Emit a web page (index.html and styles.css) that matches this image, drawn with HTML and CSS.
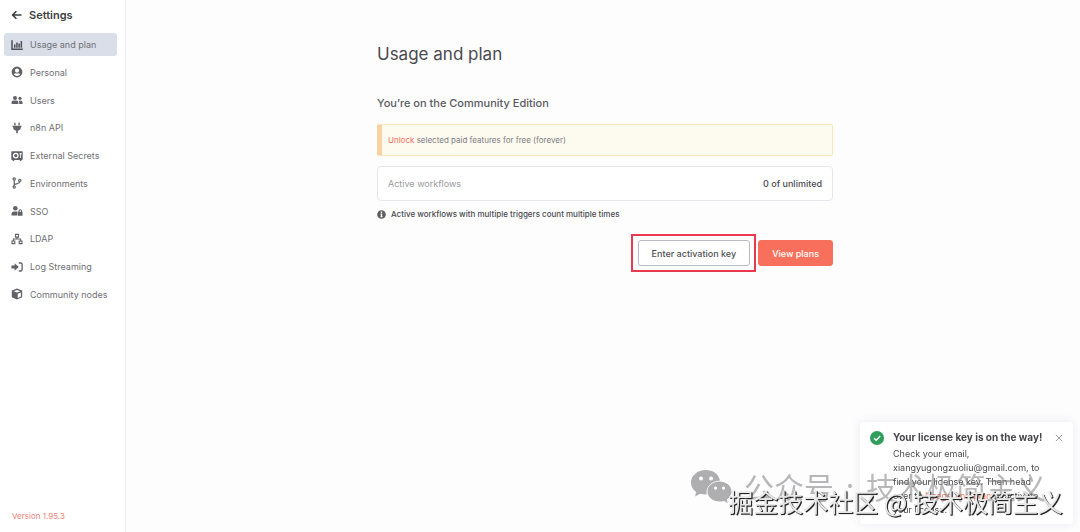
FILE: index.html
```html
<!DOCTYPE html>
<html lang="en">
<head>
<meta charset="utf-8">
<meta name="viewport" content="width=device-width, initial-scale=1.0">
<title>Settings - Usage and plan</title>
<link rel="stylesheet" href="styles.css">
</head>
<body>
<div class="app">
	<aside class="sidebar">
		<a href="#" class="back">
			<svg class="icon" viewBox="0 0 12 12"><path d="M10.500 6H1.800M5.400 2.200 1.600 6l3.800 3.800" fill="none" stroke="currentColor" stroke-width="1.600"/></svg>
			<span>Settings</span>
		</a>
		<nav class="menu">
			<a href="#" class="item active">
				<svg class="icon" viewBox="0 0 12 12"><path d="M1 1.200v9h10.800" fill="none" stroke="currentColor" stroke-width="1.500"/><path d="M3 5.500h1.500v3.200H3zM5.200 3.500h1.500v5.200H5.200zM7.400 4.600h1.500v4.100H7.400zM9.600 2h1.500v6.700H9.600z"/></svg>
				<span>Usage and plan</span>
			</a>
			<a href="#" class="item">
				<svg class="icon" viewBox="0 0 12 12"><path fill-rule="evenodd" d="M6 .6a5.400 5.400 0 1 0 0 10.800A5.400 5.400 0 0 0 6 .6zM6 2.500a2.100 2.100 0 1 1 0 4.200 2.100 2.100 0 0 1 0-4.200zM2.900 8.600c.5-.9 1.200-1.300 2-1.300.7.3 1.500.3 2.200 0 .8 0 1.500.4 2 1.300A4 4 0 0 1 6 10a4 4 0 0 1-3.100-1.400z"/></svg>
				<span>Personal</span>
			</a>
			<a href="#" class="item">
				<svg class="icon" viewBox="0 0 12 12"><circle cx="4" cy="4" r="2"/><circle cx="9" cy="4.300" r="1.600"/><path d="M.6 10V8.600c0-1.200.8-2 2-2h2.800c1.200 0 2 .8 2 2V10zM8.200 10V8.400c0-.7-.2-1.200-.6-1.700h2.200c1 0 1.700.7 1.700 1.700V10z"/></svg>
				<span>Users</span>
			</a>
			<a href="#" class="item">
				<svg class="icon" viewBox="0 0 12 12"><path d="M3.200.7h1.400v2.600H3.200zM7.400.7h1.400v2.600H7.400zM1.500 3.800h9V5h-.6c0 2-1.200 3.400-3.100 3.800v2.400H5.200V8.800C3.300 8.400 2.100 7 2.100 5h-.6z"/></svg>
				<span>n8n API</span>
			</a>
			<a href="#" class="item">
				<svg class="icon" viewBox="0 0 12 12"><path fill-rule="evenodd" d="M1 1.200h10c.4 0 .7.3.7.7v7.400c0 .4-.3.7-.7.7h-.6v.9H8.800V10H3.200v.9H1.600V10H1c-.4 0-.7-.3-.7-.7V1.900c0-.4.3-.7.7-.7zM4.800 2.700a2.900 2.900 0 1 0 0 5.800 2.900 2.900 0 0 0 0-5.800zM8.600 3v1.500h.6V8h.8V4.500h.6V3z"/><circle cx="4.800" cy="5.600" r="1.600"/></svg>
				<span>External Secrets</span>
			</a>
			<a href="#" class="item">
				<svg class="icon" viewBox="0 0 12 12"><g fill="none" stroke="currentColor" stroke-width="1.200"><circle cx="3.200" cy="2" r="1.100"/><circle cx="3.200" cy="10" r="1.100"/><circle cx="8.800" cy="3.400" r="1.100"/><path d="M3.200 3.200v5.600M8.800 4.600c0 2-2.200 1.900-5.200 2.900"/></g></svg>
				<span>Environments</span>
			</a>
			<a href="#" class="item">
				<svg class="icon" viewBox="0 0 12 12"><circle cx="4.300" cy="3.300" r="2.300"/><path d="M.5 10.500V9c0-1.600 1-2.600 2.600-2.600h2.300c.4 0 .8.1 1.100.2v3.900z"/><path fill-rule="evenodd" d="M7 6.800h.5v-.9a1.700 1.700 0 0 1 3.500 0v.9h.5v3.900H7zM8.500 6.800H10v-.9a.75.75 0 0 0-1.500 0z"/></svg>
				<span>SSO</span>
			</a>
			<a href="#" class="item">
				<svg class="icon" viewBox="0 0 12 12"><g fill="none" stroke="currentColor" stroke-width="1.100"><path d="M4.500 1.400h3v2.700h-3zM1 8h2.800v2.600H1zM8.200 8H11v2.600H8.200zM6 4.200V6M2.400 8V6h7.200v2"/></g></svg>
				<span>LDAP</span>
			</a>
			<a href="#" class="item">
				<svg class="icon" viewBox="0 0 12 12"><path d="M.4 4.600h3.200V2.300L7.800 6 3.600 9.700V7.400H.4z"/><path d="M7.800 2h2c.8 0 1.300.5 1.300 1.300v5.400c0 .8-.5 1.300-1.300 1.300h-2" fill="none" stroke="currentColor" stroke-width="1.300"/></svg>
				<span>Log Streaming</span>
			</a>
			<a href="#" class="item">
				<svg class="icon" viewBox="0 0 12 12"><path fill-rule="evenodd" d="M6 .6l5.200 2v6.600L6 11.500.8 9.200V2.600zM6 1.900 2.600 3.200 6 4.600l3.400-1.400zM6.700 5.800v4.100L9.900 8.500V4.500z"/></svg>
				<span>Community nodes</span>
			</a>
		</nav>
		<a href="#" class="version">Version 1.95.3</a>
	</aside>
	<main class="main">
		<div class="content">
			<h1>Usage and plan</h1>
			<h2>You’re on the Community Edition</h2>
			<div class="notice"><p><a href="#">Unlock</a> selected paid features for free (forever)</p></div>
			<div class="quota">
				<span class="quota_name">Active workflows</span>
				<span class="quota_value">0 of unlimited</span>
			</div>
			<p class="info">
				<svg viewBox="0 0 10 10"><circle cx="5" cy="5" r="4.800" fill="#5f5f63"/><path d="M4.300 1.800h1.400v1.400H4.300zM3.900 4h1.800v3h.5v1H3.800V7h.5V5h-.4z" fill="#fff"/></svg>
				<span>Active workflows with multiple triggers count multiple times</span>
			</p>
			<div class="buttons">
				<div class="highlight"><button type="button" class="btn">Enter activation key</button></div>
				<button type="button" class="btn primary">View plans</button>
			</div>
		</div>
	</main>
</div>
<div class="toast" role="alert">
	<svg class="toast_icon" viewBox="0 0 14 14"><circle cx="7" cy="7" r="7" fill="#2f9e5b"/><path d="M4 7.200l2.200 2.100L10.200 5" fill="none" stroke="#fff" stroke-width="1.400"/></svg>
	<div class="toast_body">
		<h3>Your license key is on the way!</h3>
		<p>Check your email, xiangyugongzuoliu@gmail.com, to find your license key. Then head over to <a href="#">Usage and plan</a> to activate your license.</p>
	</div>
	<button type="button" class="close" aria-label="Close"><svg viewBox="0 0 8 8"><path d="M.8.8l6.400 6.400M7.200.8.8 7.200" fill="none" stroke="#909298" stroke-width=".9"/></svg></button>
</div>
<div class="mark mark_grey">
	<svg viewBox="0 0 42 34"><path fill-rule="evenodd" d="M16 1C7.500 1 1 6.500 1 13.500c0 4 2 7.300 5.200 9.500L5 27.500l5.200-2.700c2 .6 4 .8 6.500.7C15.500 18 21 12 30 11.500 28.500 5 23 1 16 1zM11 7.500a2 2 0 1 1 0 4 2 2 0 0 1 0-4zM21 7.500a2 2 0 1 1 0 4 2 2 0 0 1 0-4z"/><path fill-rule="evenodd" d="M29.500 12.500c-6.600 0-12 4.400-12 10s5.400 10 12 10c1.500 0 3-.2 4.300-.6l4 2-1-3.400c2.800-1.900 4.700-4.700 4.700-8 0-5.600-5.400-10-12-10zM25.500 17.500a1.600 1.600 0 1 1 0 3.200 1.600 1.600 0 0 1 0-3.200zM33.500 17.500a1.600 1.600 0 1 1 0 3.200 1.600 1.600 0 0 1 0-3.200z"/></svg>
	<span>公众号</span>
	<span class="dot">·</span>
	<span>技术极简主义</span>
</div>
<div class="mark mark_site">掘金技术社区 @ 技术极简主义</div>
</body>
</html>
```
FILE: styles.css
```css
*{box-sizing:border-box;}
body{margin:0;background:#fdfdfe;color:#4a4a4e;font-family:Inter,"Noto Sans CJK SC",sans-serif;font-size:9px;}
h1,h2,h3,p{margin:0;font-weight:400;}
a{color:inherit;text-decoration:none;}
button{font-family:inherit;}
svg{display:block;flex:none;}
.app{display:flex;min-height:100vh;}
.sidebar{width:126px;flex:none;display:flex;flex-direction:column;background:#fff;border-right:1px solid #ececf0;}
.back{display:flex;align-items:center;gap:6px;height:29px;padding:0 11px;font-size:11px;font-weight:600;color:#3f3f43;}
.icon{width:12px;height:12px;fill:currentColor;}
.menu{display:flex;flex-direction:column;justify-content:space-between;height:277px;padding:4px 8px 0 4px;}
.item{display:flex;align-items:center;gap:7px;height:23px;padding:0 7px;border-radius:3px;color:#707075;}
.item .icon{color:#626266;}
.active{background:#d9dee8;}
.active .icon{color:#4f4f55;}
.version{margin-top:auto;padding:0 12px 10px;font-size:8px;line-height:12px;color:#f0837a;}
.main{flex:1;display:flex;justify-content:center;padding:40px 24px 40px 28px;}
.content{width:100%;max-width:456px;}
h1{font-size:17px;line-height:28px;}
h2{margin-top:25px;font-size:11px;line-height:20px;font-weight:500;color:#5a5a5e;}
.notice{margin-top:11px;padding:9px 6px;border:1px solid #f8e5c0;border-left:5px solid #f8d3a0;border-radius:2px;background:#fdfaf0;font-size:8px;line-height:12px;color:#7d7d80;}
.notice a{color:#f4705c;}
.quota{display:flex;justify-content:space-between;align-items:center;height:35px;margin-top:10px;padding:0 10px;border:1px solid #e6e7ec;border-radius:4px;background:#fff;}
.quota_name{color:#9a9a9e;}
.quota_value{font-weight:500;}
.info{display:flex;align-items:center;gap:5px;margin-top:7px;font-size:8px;line-height:12px;font-weight:500;}
.info svg{width:9px;height:9px;}
.buttons{display:flex;justify-content:flex-end;align-items:center;gap:2px;margin-top:14px;}
.highlight{padding:4px 4px 4px 5px;border:2px solid #e8394f;}
.btn{height:26px;padding:0 13px;border:1px solid #b9bac6;border-radius:3px;background:#fff;font-size:9px;font-weight:500;color:#4f4f54;}
.primary{border-color:#f8705c;background:#f8705c;color:#fff;}
.toast{position:fixed;right:7px;bottom:8px;display:flex;align-items:flex-start;width:213px;padding:8px 10px 7px;border-radius:3px;background:#fff;box-shadow:0 0 10px rgba(60,60,90,.1);}
.toast_icon{width:14px;height:14px;margin-top:1px;}
.toast_body{flex:1;padding-left:9px;}
.toast h3{font-size:10px;line-height:15px;font-weight:700;white-space:nowrap;color:#47474b;}
.toast p{width:152px;margin-top:2px;font-size:9px;line-height:14px;}
.toast a{color:#f4705c;}
.close{margin-top:4px;padding:0;border:0;background:none;}
.close svg{width:8px;height:8px;}
.mark{position:fixed;white-space:nowrap;pointer-events:none;font-family:"Noto Sans CJK SC",sans-serif;}
.mark_grey{right:34px;bottom:24px;display:flex;align-items:center;gap:12px;font-size:30px;line-height:44px;color:rgba(125,125,128,.55);}
.mark_grey svg{width:42px;height:34px;fill:#aeaeb0;}
.dot{font-family:"Noto Sans",sans-serif;}
.mark_site{right:17px;bottom:13px;font-size:25px;line-height:36px;color:#e8e8e8;text-shadow:1px 1px 0 #222,1px 1px 1px #333;}
```
